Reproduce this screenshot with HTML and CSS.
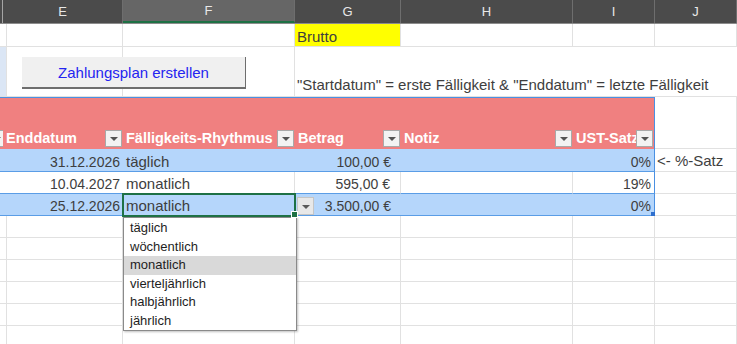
FILE: index.html
```html
<!DOCTYPE html>
<html lang="de">
<head>
    <meta charset="UTF-8">
    <title>Zahlungsplan</title>
    <link rel="stylesheet" href="styles.css">
</head>
<body>
    <div class="sheet">
        <div class="row colhead">
            <div class="hc"></div>
            <div class="hc">E</div>
            <div class="hc active">F</div>
            <div class="hc">G</div>
            <div class="hc">H</div>
            <div class="hc">I</div>
            <div class="hc">J</div>
        </div>

        <div class="row r-brutto">
            <div class="c"></div>
            <div class="c"></div>
            <div class="c"></div>
            <div class="c yellow txt">Brutto</div>
            <div class="c"></div>
            <div class="c"></div>
            <div class="c"></div>
        </div>

        <div class="row r-button">
            <div class="c sel-strip"></div>
            <div class="c"></div>
            <div class="c"></div>
            <div class="c note txt">"Startdatum" = erste Fälligkeit &amp; "Enddatum" = letzte Fälligkeit</div>
            <div class="c spill"></div>
            <div class="c spill"></div>
            <div class="c spill"></div>
        </div>

        <div class="row r-thead">
            <div class="th"><span class="filter"></span></div>
            <div class="th">Enddatum<span class="filter"></span></div>
            <div class="th">Fälligkeits-Rhythmus<span class="filter"></span></div>
            <div class="th">Betrag<span class="filter"></span></div>
            <div class="th">Notiz<span class="filter"></span></div>
            <div class="th last">UST-Satz<span class="filter"></span></div>
            <div class="c"></div>
        </div>

        <div class="row r-data blue first">
            <div class="td"></div>
            <div class="td num">31.12.2026</div>
            <div class="td txt">täglich</div>
            <div class="td num cur">100,00 €</div>
            <div class="td"></div>
            <div class="td num last">0%</div>
            <div class="c side txt">&lt;- %-Satz</div>
        </div>

        <div class="row r-data plain">
            <div class="td"></div>
            <div class="td num">10.04.2027</div>
            <div class="td txt">monatlich</div>
            <div class="td num cur">595,00 €</div>
            <div class="td"></div>
            <div class="td num last">19%</div>
            <div class="c"></div>
        </div>

        <div class="row r-data blue">
            <div class="td"></div>
            <div class="td num">25.12.2026</div>
            <div class="td txt current">monatlich</div>
            <div class="td num cur">3.500,00 €</div>
            <div class="td"></div>
            <div class="td num last">0%<span class="resize"></span></div>
            <div class="c"></div>
        </div>

        <div class="row r-empty"><div class="c"></div><div class="c"></div><div class="c"></div><div class="c"></div><div class="c"></div><div class="c"></div><div class="c"></div></div>
        <div class="row r-empty"><div class="c"></div><div class="c"></div><div class="c"></div><div class="c"></div><div class="c"></div><div class="c"></div><div class="c"></div></div>
        <div class="row r-empty"><div class="c"></div><div class="c"></div><div class="c"></div><div class="c"></div><div class="c"></div><div class="c"></div><div class="c"></div></div>
        <div class="row r-empty"><div class="c"></div><div class="c"></div><div class="c"></div><div class="c"></div><div class="c"></div><div class="c"></div><div class="c"></div></div>
        <div class="row r-empty"><div class="c"></div><div class="c"></div><div class="c"></div><div class="c"></div><div class="c"></div><div class="c"></div><div class="c"></div></div>
        <div class="row r-empty"><div class="c"></div><div class="c"></div><div class="c"></div><div class="c"></div><div class="c"></div><div class="c"></div><div class="c"></div></div>

        <button class="macro-btn">Zahlungsplan erstellen</button>

        <span class="list-arrow"></span>

        <ul class="dropdown">
            <li>täglich</li>
            <li>wöchentlich</li>
            <li class="hover">monatlich</li>
            <li>vierteljährlich</li>
            <li>halbjährlich</li>
            <li>jährlich</li>
        </ul>
    </div>
</body>
</html>
```

FILE: styles.css
```css
body {
    margin: 0;
    background: #ffffff;
    font-family: 'Liberation Sans', Arial, sans-serif;
    font-size: 14px;
    color: #3e3e3e;
}
.sheet {
    position: relative;
    width: 737px;
    height: 344px;
    overflow: hidden;
}
.row {
    display: grid;
    grid-template-columns: 3px 120px 172px 106px 172px 82px 82px;
}
.c, .td, .th {
    box-sizing: border-box;
    border-right: 1px solid #e1e1e1;
    border-bottom: 1px solid #e1e1e1;
    white-space: nowrap;
    display: flex;
    align-items: flex-end;
    padding: 0 3px 2px 3px;
    min-width: 0;
}
.txt {
    font-size: 15px;
}

/* column letters */
.colhead {
    height: 24px;
    background: #4b4b4b;
    border-bottom: 1px solid #8c8c8c;
    box-sizing: border-box;
}
.hc {
    box-sizing: border-box;
    border-right: 1px solid #6e6e6e;
    color: #e8e8e8;
    font-size: 13px;
    display: flex;
    align-items: center;
    justify-content: center;
}
.hc:first-child {
    border-right: 1px solid #a5a5a5;
}
.hc.active {
    background: #666666;
    border-bottom: 2px solid #1e7145;
}

.r-brutto { height: 23px; }
.r-button { height: 50px; }
.r-thead { height: 52px; }
.r-data { height: 22px; }
.r-data.first { height: 23px; }
.r-empty { height: 22px; }

.yellow {
    background: #ffff00;
    padding-left: 2px;
    padding-bottom: 1px;
}
.sel-strip {
    background: #dbe6f5;
}
.note {
    position: relative;
    z-index: 1;
    overflow: visible;
    padding-bottom: 3px;
    border-right: none;
    padding-left: 2px;
}
.spill {
    border-right: none;
}

/* table header */
.th {
    position: relative;
    background: #f08080;
    border-top: 1px solid #4a90e2;
    border-right: none;
    border-bottom: none;
    color: #ffffff;
    font-size: 14.5px;
    font-weight: bold;
    padding-left: 3px;
    padding-bottom: 3px;
}
.th.last {
    border-right: 1px solid #4a90e2;
}
.filter {
    position: absolute;
    right: 1px;
    bottom: 2px;
    width: 15px;
    height: 15px;
    background: #f3f3f3;
    border: 1px solid #a9a9a9;
}
.filter::after {
    content: "";
    position: absolute;
    left: 4px;
    top: 6px;
    border-left: 4px solid transparent;
    border-right: 4px solid transparent;
    border-top: 4px solid #555555;
}

/* table body */
.td {
    position: relative;
    padding-bottom: 1px;
}
.blue .td {
    background: #b5d6fb;
    border-right: none;
    border-bottom: 1px solid #5a9de6;
}
.plain .td {
    border-bottom: 1px solid #5a9de6;
}
.plain .td:nth-child(1),
.plain .td:nth-child(2) {
    border-right: none;
}
.num {
    justify-content: flex-end;
}
.cur {
    padding-right: 10px;
}
.td.last,
.blue .td.last {
    border-right: 1px solid #4a90e2;
}
.side {
    padding-left: 2px;
}
.current {
    outline: 2px solid #1e7145;
    outline-offset: -1px;
    z-index: 1;
}
.current::after {
    content: "";
    position: absolute;
    right: -3px;
    bottom: -3px;
    width: 5px;
    height: 5px;
    background: #1e7145;
    border: 1px solid #ffffff;
}
.resize {
    position: absolute;
    right: -1px;
    bottom: -1px;
    width: 4px;
    height: 4px;
    background: #2f6fce;
}

/* overlays */
.macro-btn {
    position: absolute;
    left: 22px;
    top: 57px;
    width: 224px;
    height: 32px;
    box-sizing: border-box;
    background: #f0f0f0;
    border: none;
    border-right: 1px solid #6e6e6e;
    border-bottom: 2px solid #6e6e6e;
    font-family: 'Liberation Sans', Arial, sans-serif;
    font-size: 15px;
    color: #2424f0;
    padding: 0;
}
.list-arrow {
    position: absolute;
    left: 297px;
    top: 197px;
    width: 17px;
    height: 18px;
    box-sizing: border-box;
    background: #e8e8e8;
    border: 1px solid #c5c5c5;
}
.list-arrow::after {
    content: "";
    position: absolute;
    left: 4px;
    top: 7px;
    border-left: 4px solid transparent;
    border-right: 4px solid transparent;
    border-top: 4px solid #5a5a5a;
}
.dropdown {
    position: absolute;
    left: 123px;
    top: 217px;
    width: 174px;
    height: 114px;
    box-sizing: border-box;
    margin: 0;
    padding: 1px 0 0 0;
    list-style: none;
    background: #ffffff;
    border: 1px solid #8a8a8a;
    box-shadow: 1px 1px 2px rgba(0, 0, 0, 0.25);
    font-size: 13px;
    color: #1e1e1e;
}
.dropdown li {
    height: 18.5px;
    line-height: 18px;
    padding-left: 6px;
}
.dropdown li.hover {
    background: #d9d9d9;
}
```
